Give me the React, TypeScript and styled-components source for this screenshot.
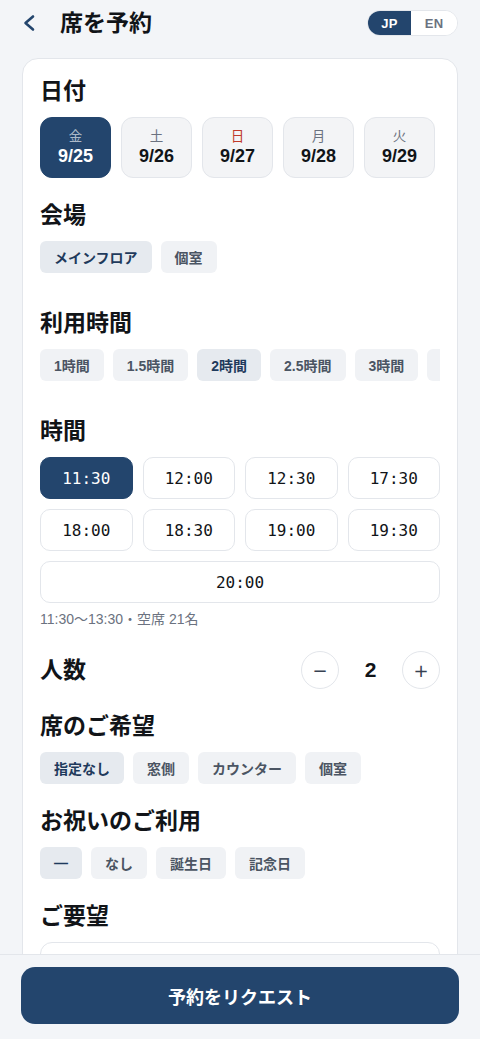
import React, { useState } from 'react';
import styled, { createGlobalStyle } from 'styled-components';

const Primary = '#23456d';
const Line = '#e3e6eb';

const GlobalStyle = createGlobalStyle`
  body {
    margin: 0;
    background: #f3f5f8;
    font-family: "Liberation Sans", "Noto Sans CJK JP", sans-serif;
    color: #111418;
  }
  * { box-sizing: border-box; }
`;

export const Page = styled.div`
  padding: 0 22px 120px;
`;

export const Header = styled.div`
  height: 46px;
  display: flex;
  align-items: center;
  justify-content: space-between;
  margin-bottom: 12px;
`;

export const HeaderLeft = styled.div`
  display: flex;
  align-items: center;
  gap: 24px;
`;

export const BackButton = styled.button`
  border: 0;
  padding: 0;
  background: none;
  display: flex;
  cursor: pointer;
`;

export const Title = styled.h1`
  margin: 0;
  font-size: 23px;
  font-weight: 700;
  line-height: 30px;
`;

export const LangToggle = styled.div`
  display: flex;
  height: 26px;
  border: 1px solid ${Line};
  border-radius: 13px;
  overflow: hidden;
  background: #fff;
`;

export const LangButton = styled.button<{ active: boolean; w: number }>`
  width: ${(p) => p.w}px;
  border: 0;
  padding: 0;
  font-family: inherit;
  font-size: 13px;
  font-weight: 700;
  letter-spacing: 0.3px;
  background: ${(p) => (p.active ? Primary : '#fff')};
  color: ${(p) => (p.active ? '#fff' : '#6b7280')};
`;

export const Card = styled.div`
  background: #fff;
  border: 1px solid ${Line};
  border-radius: 16px;
  padding: 17px;
  display: flex;
  flex-direction: column;
  gap: 22px;
`;

export const Section = styled.section``;

export const Heading = styled.h2`
  margin: 0 0 11px;
  font-size: 23px;
  font-weight: 700;
  line-height: 30px;
`;

export const DateRow = styled.div`
  display: flex;
  gap: 10px;
`;

export const DatePill = styled.button<{ active: boolean }>`
  width: 71px;
  height: 61px;
  border-radius: 12px;
  border: 1px solid ${(p) => (p.active ? Primary : Line)};
  background: ${(p) => (p.active ? Primary : '#f3f4f6')};
  color: ${(p) => (p.active ? '#fff' : '#111418')};
  font-family: inherit;
  display: flex;
  flex-direction: column;
  align-items: center;
  justify-content: center;
  gap: 1px;
  padding: 0;
`;

export const Weekday = styled.span<{ active: boolean; sunday: boolean }>`
  font-size: 13.5px;
  line-height: 16px;
  color: ${(p) => (p.active ? 'rgba(255,255,255,0.65)' : p.sunday ? '#c0392b' : '#6b7280')};
`;

export const DateNum = styled.span`
  font-size: 18px;
  font-weight: 700;
  line-height: 21px;
`;

export const ScrollRow = styled.div`
  display: flex;
  gap: 9px;
  overflow-x: auto;
  padding-bottom: 13px;
  scrollbar-width: none;
`;

export const WrapRow = styled.div`
  display: flex;
  flex-wrap: wrap;
  gap: 9px;
`;

export const Chip = styled.button<{ active: boolean }>`
  flex: none;
  height: 32px;
  padding: 0 14px;
  border: 0;
  border-radius: 6px;
  font-family: inherit;
  font-size: 14px;
  font-weight: 600;
  white-space: nowrap;
  background: ${(p) => (p.active ? '#e6eaef' : '#f0f2f5')};
  color: ${(p) => (p.active ? '#1f3a5c' : '#4b5563')};
`;

export const TimeGrid = styled.div`
  display: grid;
  grid-template-columns: repeat(4, 1fr);
  gap: 10px;
`;

export const TimeButton = styled.button<{ active: boolean; wide?: boolean }>`
  height: 42px;
  border-radius: 10px;
  border: 1px solid ${(p) => (p.active ? Primary : Line)};
  background: ${(p) => (p.active ? Primary : '#fff')};
  color: ${(p) => (p.active ? '#fff' : '#111418')};
  font-family: "DejaVu Sans Mono", monospace;
  font-size: 16px;
  grid-column: ${(p) => (p.wide ? '1 / -1' : 'auto')};
`;

export const Info = styled.div`
  margin-top: 6px;
  font-size: 14px;
  line-height: 20px;
  color: #6b7280;
`;

export const CountRow = styled.div`
  display: flex;
  align-items: center;
  justify-content: space-between;
  ${Heading} { margin: 0; }
`;

export const Stepper = styled.div`
  display: flex;
  align-items: center;
  gap: 12px;
`;

export const RoundButton = styled.button`
  width: 38px;
  height: 38px;
  border-radius: 50%;
  border: 1px solid ${Line};
  background: #fff;
  color: #374151;
  font-family: "DejaVu Sans", sans-serif;
  font-size: 18px;
  display: flex;
  align-items: center;
  justify-content: center;
  padding: 0;
`;

export const Count = styled.span`
  width: 39px;
  text-align: center;
  font-size: 21px;
  font-weight: 700;
`;

export const Note = styled.textarea`
  display: block;
  width: 100%;
  height: 96px;
  border: 1px solid ${Line};
  border-radius: 12px;
  resize: none;
  font-family: inherit;
  font-size: 14px;
  padding: 12px;
`;

export const BottomBar = styled.div`
  position: fixed;
  left: 0;
  right: 0;
  bottom: 0;
  background: #f3f5f8;
  border-top: 1px solid ${Line};
  padding: 12px 21px 15px;
`;

export const SubmitButton = styled.button`
  width: 100%;
  height: 57px;
  border: 0;
  border-radius: 14px;
  background: ${Primary};
  color: #fff;
  font-family: inherit;
  font-size: 18px;
  font-weight: 700;
`;

const dates = [
  { w: '金', d: '9/25' },
  { w: '土', d: '9/26' },
  { w: '日', d: '9/27' },
  { w: '月', d: '9/28' },
  { w: '火', d: '9/29' },
];
const venues = ['メインフロア', '個室'];
const durations = ['1時間', '1.5時間', '2時間', '2.5時間', '3時間', '4時間'];
const times = ['11:30', '12:00', '12:30', '17:30', '18:00', '18:30', '19:00', '19:30', '20:00'];
const seats = ['指定なし', '窓側', 'カウンター', '個室'];
const occasions = ['—', 'なし', '誕生日', '記念日'];

const App = (): JSX.Element => {
  const [lang, setLang] = useState('JP');
  const [date, setDate] = useState(0);
  const [venue, setVenue] = useState(0);
  const [duration, setDuration] = useState(2);
  const [time, setTime] = useState(0);
  const [count, setCount] = useState(2);
  const [seat, setSeat] = useState(0);
  const [occasion, setOccasion] = useState(0);

  return (
    <Page>
      <GlobalStyle />
      <Header>
        <HeaderLeft>
          <BackButton aria-label="戻る">
            <svg width="14" height="18" viewBox="0 0 14 18" fill="none">
              <path d="M11 2.5 L3.5 9 L11 15.5" stroke={Primary} strokeWidth="2.6" strokeLinecap="round" strokeLinejoin="round" />
            </svg>
          </BackButton>
          <Title>席を予約</Title>
        </HeaderLeft>
        <LangToggle>
          <LangButton w={43} active={lang === 'JP'} onClick={() => setLang('JP')}>JP</LangButton>
          <LangButton w={46} active={lang === 'EN'} onClick={() => setLang('EN')}>EN</LangButton>
        </LangToggle>
      </Header>

      <Card>
        <Section>
          <Heading>日付</Heading>
          <DateRow>
            {dates.map((d, i) => (
              <DatePill key={d.d} active={i === date} onClick={() => setDate(i)}>
                <Weekday active={i === date} sunday={d.w === '日'}>{d.w}</Weekday>
                <DateNum>{d.d}</DateNum>
              </DatePill>
            ))}
          </DateRow>
        </Section>

        <Section>
          <Heading>会場</Heading>
          <ScrollRow>
            {venues.map((v, i) => (
              <Chip key={v} active={i === venue} onClick={() => setVenue(i)}>{v}</Chip>
            ))}
          </ScrollRow>
        </Section>

        <Section>
          <Heading>利用時間</Heading>
          <ScrollRow>
            {durations.map((v, i) => (
              <Chip key={v} active={i === duration} onClick={() => setDuration(i)}>{v}</Chip>
            ))}
          </ScrollRow>
        </Section>

        <Section>
          <Heading>時間</Heading>
          <TimeGrid>
            {times.map((t, i) => (
              <TimeButton key={t} active={i === time} wide={i === times.length - 1} onClick={() => setTime(i)}>
                {t}
              </TimeButton>
            ))}
          </TimeGrid>
          <Info>11:30〜13:30・空席 21名</Info>
        </Section>

        <CountRow>
          <Heading>人数</Heading>
          <Stepper>
            <RoundButton onClick={() => setCount(Math.max(1, count - 1))}>−</RoundButton>
            <Count>{count}</Count>
            <RoundButton onClick={() => setCount(count + 1)}>+</RoundButton>
          </Stepper>
        </CountRow>

        <Section>
          <Heading>席のご希望</Heading>
          <WrapRow>
            {seats.map((v, i) => (
              <Chip key={v} active={i === seat} onClick={() => setSeat(i)}>{v}</Chip>
            ))}
          </WrapRow>
        </Section>

        <Section>
          <Heading>お祝いのご利用</Heading>
          <WrapRow>
            {occasions.map((v, i) => (
              <Chip key={v} active={i === occasion} onClick={() => setOccasion(i)}>{v}</Chip>
            ))}
          </WrapRow>
        </Section>

        <Section>
          <Heading>ご要望</Heading>
          <Note />
        </Section>
      </Card>

      <BottomBar>
        <SubmitButton>予約をリクエスト</SubmitButton>
      </BottomBar>
    </Page>
  );
};

export default App;
